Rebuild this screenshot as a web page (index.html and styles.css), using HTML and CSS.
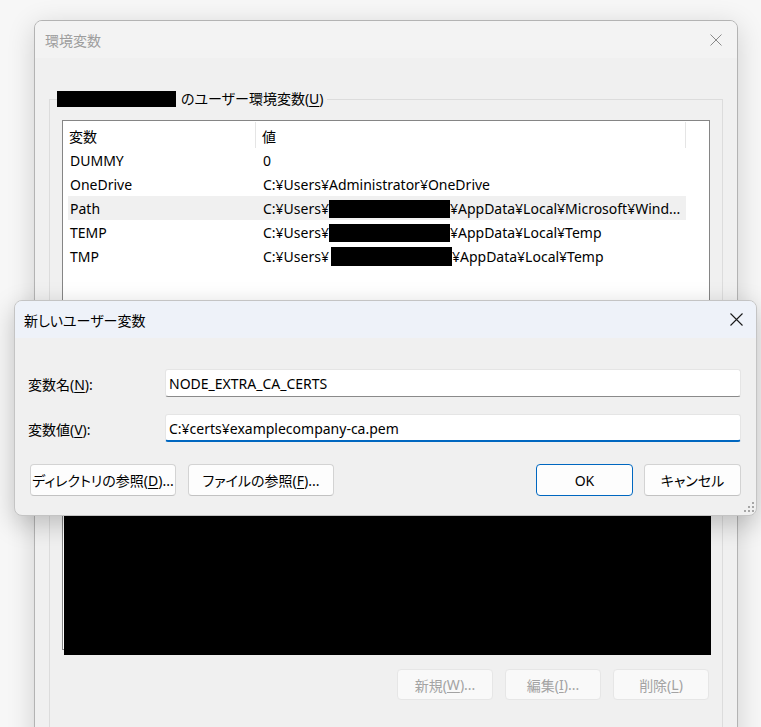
FILE: index.html
```html
<!DOCTYPE html>
<html lang="ja">
<head>
<meta charset="utf-8">
<title>環境変数</title>
<link rel="stylesheet" href="styles.css">
</head>
<body>
<div class="desk">
  <div class="win back">
    <div class="titlebar">
      <span class="title inactive">環境変数</span>
      <svg class="close" width="12" height="12" viewBox="0 0 12 12"><path d="M0.5 0.5L11.5 11.5M11.5 0.5L0.5 11.5" stroke="#8a8a8a" stroke-width="1" fill="none"/></svg>
    </div>
    <div class="back-body">
      <fieldset class="group">
        <legend class="legend"><span class="redact r-legend"></span> のユーザー環境変数(<u>U</u>)</legend>
        <div class="listview">
          <div class="lv-head">
            <div class="lv-hcell c1">変数</div>
            <div class="lv-hcell c2">値</div>
          </div>
          <div class="lv-row"><div class="c-name">DUMMY</div><div class="c-val">0</div></div>
          <div class="lv-row"><div class="c-name">OneDrive</div><div class="c-val">C:¥Users¥Administrator¥OneDrive</div></div>
          <div class="lv-row sel"><div class="c-name">Path</div><div class="c-val">C:¥Users¥<span class="redact r-user"></span>¥AppData¥Local¥Microsoft¥Wind...</div></div>
          <div class="lv-row"><div class="c-name">TEMP</div><div class="c-val">C:¥Users¥<span class="redact r-user"></span>¥AppData¥Local¥Temp</div></div>
          <div class="lv-row"><div class="c-name">TMP</div><div class="c-val">C:¥Users¥<span class="redact r-user r-tmp"></span>¥AppData¥Local¥Temp</div></div>
        </div>
        <div class="group-buttons">
          <button class="btn disabled">新規(<u>W</u>)...</button>
          <button class="btn disabled">編集(<u>I</u>)...</button>
          <button class="btn disabled">削除(<u>L</u>)</button>
        </div>
      </fieldset>
    </div>
  </div>

  <div class="redact-block"></div>

  <div class="win front">
    <div class="titlebar active">
      <span class="title">新しいユーザー変数</span>
      <svg class="close" width="13" height="13" viewBox="0 0 13 13"><path d="M0.5 0.5L12.5 12.5M12.5 0.5L0.5 12.5" stroke="#1a1a1a" stroke-width="1.1" fill="none"/></svg>
    </div>
    <div class="front-body">
      <div class="form">
        <label class="lbl">変数名(<u>N</u>):</label>
        <div class="input">NODE_EXTRA_CA_CERTS</div>
        <label class="lbl">変数値(<u>V</u>):</label>
        <div class="input focus">C:¥certs¥examplecompany-ca.pem</div>
      </div>
      <div class="actions">
        <div class="left-actions">
          <button class="btn wide">ディレクトリの参照(<u>D</u>)...</button>
          <button class="btn wide">ファイルの参照(<u>F</u>)...</button>
        </div>
        <div class="right-actions">
          <button class="btn std primary">OK</button>
          <button class="btn std">キャンセル</button>
        </div>
      </div>
    </div>
    <svg class="grip" width="10" height="10" viewBox="0 0 10 10">
      <rect x="8" y="0" width="2" height="2" fill="#a6a6a6"/>
      <rect x="4" y="4" width="2" height="2" fill="#a6a6a6"/>
      <rect x="8" y="4" width="2" height="2" fill="#a6a6a6"/>
      <rect x="0" y="8" width="2" height="2" fill="#a6a6a6"/>
      <rect x="4" y="8" width="2" height="2" fill="#a6a6a6"/>
      <rect x="8" y="8" width="2" height="2" fill="#a6a6a6"/>
    </svg>
  </div>
</div>
</body>
</html>
```
FILE: styles.css
```css
html, body {
  margin: 0;
  padding: 0;
}
body {
  width: 761px;
  height: 727px;
  overflow: hidden;
  background: #f7f7f7;
  font-family: "Noto Sans", "Noto Sans CJK JP", sans-serif;
  font-size: 14px;
  font-feature-settings: "palt";
  color: #000;
}
.desk {
  position: relative;
  width: 761px;
  height: 727px;
  overflow: hidden;
}
u { text-decoration: underline; text-underline-offset: 2px; }

.win {
  position: absolute;
  box-sizing: border-box;
  border-radius: 8px;
  overflow: hidden;
  background: #f0f0f0;
}
.back {
  left: 34px;
  top: 20px;
  width: 704px;
  height: 740px;
  border: 1px solid #b3b3b3;
  box-shadow: 0 6px 28px rgba(0,0,0,0.16);
}
.front {
  left: 14px;
  top: 300px;
  width: 743px;
  height: 216px;
  border: 1px solid #c4c4c4;
  box-shadow: 0 8px 26px rgba(0,0,0,0.22);
}

.titlebar {
  height: 37px;
  display: flex;
  align-items: center;
  justify-content: space-between;
  background: #f3f3f3;
}
.back .titlebar { padding: 0 15px 0 10px; }
.front .titlebar { padding: 0 13px 0 9px; background: #eef2f9; }
.title { font-size: 14px; }
.inactive { color: #9d9d9d; }
.close { display: block; }

.back-body {
  padding: 32px 14px 0 14px;
}
.group {
  margin: 0;
  border: 1px solid #dcdcdc;
  padding: 12px 12px 20px 12px;
  height: 640px;
  box-sizing: border-box;
}
.legend {
  padding: 0 3px 0 0;
  margin-left: -5px;
  line-height: 18px;
  display: flex;
  align-items: center;
}
.redact {
  display: inline-block;
  background: #000;
  vertical-align: middle;
}
.r-legend { width: 119px; height: 16px; margin-right: 5px; }
.r-user { width: 121px; height: 18px; }
.r-tmp { margin-left: 2px; height: 19px; }

.listview {
  height: 530px;
  box-sizing: border-box;
  border: 1px solid #858585;
  background: #fff;
}
.lv-head {
  display: grid;
  grid-template-columns: 193px 430px;
  height: 27px;
}
.lv-hcell {
  border-right: 1px solid #e5e5e5;
  margin: 1px 0 0;
  display: flex;
  align-items: center;
  padding-left: 6px;
  padding-top: 1px;
}
.lv-row {
  display: grid;
  grid-template-columns: 188px 430px;
  height: 24px;
  box-sizing: border-box;
  padding-top: 1px;
  align-items: center;
  margin-left: 5px;
  width: 618px;
  white-space: nowrap;
}
.lv-row.sel { background: #f0f0f0; }
.c-name { padding-left: 2px; }
.c-val { padding-left: 7px; display: flex; align-items: center; }

.group-buttons {
  display: flex;
  justify-content: flex-end;
  gap: 12px;
  margin-top: 19px;
  padding-right: 1px;
}

.btn {
  font-family: inherit;
  font-size: 14px;
  font-feature-settings: "palt";
  white-space: nowrap;
  box-sizing: border-box;
  height: 32px;
  border: 1px solid #d3d3d3;
  border-bottom-color: #c2c2c2;
  border-radius: 4px;
  background: #fdfdfd;
  color: #000;
  padding: 0;
  display: flex;
  align-items: center;
  justify-content: center;
}
.btn.disabled {
  width: 96px;
  height: 31px;
  color: #a3a3a3;
  background: #f9f9f9;
  border-color: #e6e6e6;
}
.btn.wide { width: 146px; }
.btn.std { width: 97px; }
.btn.primary { border: 1px solid #0067c0; }

.front-body {
  padding: 31px 15px 0 13px;
}
.form {
  display: grid;
  grid-template-columns: 137px 576px;
  row-gap: 17px;
  align-items: center;
}
.lbl { padding-top: 2px; }
.input {
  height: 28px;
  box-sizing: border-box;
  background: #fff;
  border: 1px solid #e5e5e5;
  border-bottom: 1px solid #8a8a8a;
  border-radius: 3px;
  padding: 0 3px;
  display: flex;
  align-items: center;
  font-size: 14px;
}
.input.focus {
  border-bottom: 2px solid #0067c0;
  padding-top: 1px;
}
.actions {
  display: flex;
  justify-content: space-between;
  margin-top: 22px;
  padding-left: 2px;
}
.left-actions, .right-actions {
  display: flex;
  gap: 12px;
}
.right-actions { gap: 11px; }

.grip {
  position: absolute;
  right: 2px;
  bottom: 3px;
}

.redact-block {
  position: absolute;
  left: 64px;
  top: 512px;
  width: 647px;
  height: 143px;
  background: #000;
}
```
